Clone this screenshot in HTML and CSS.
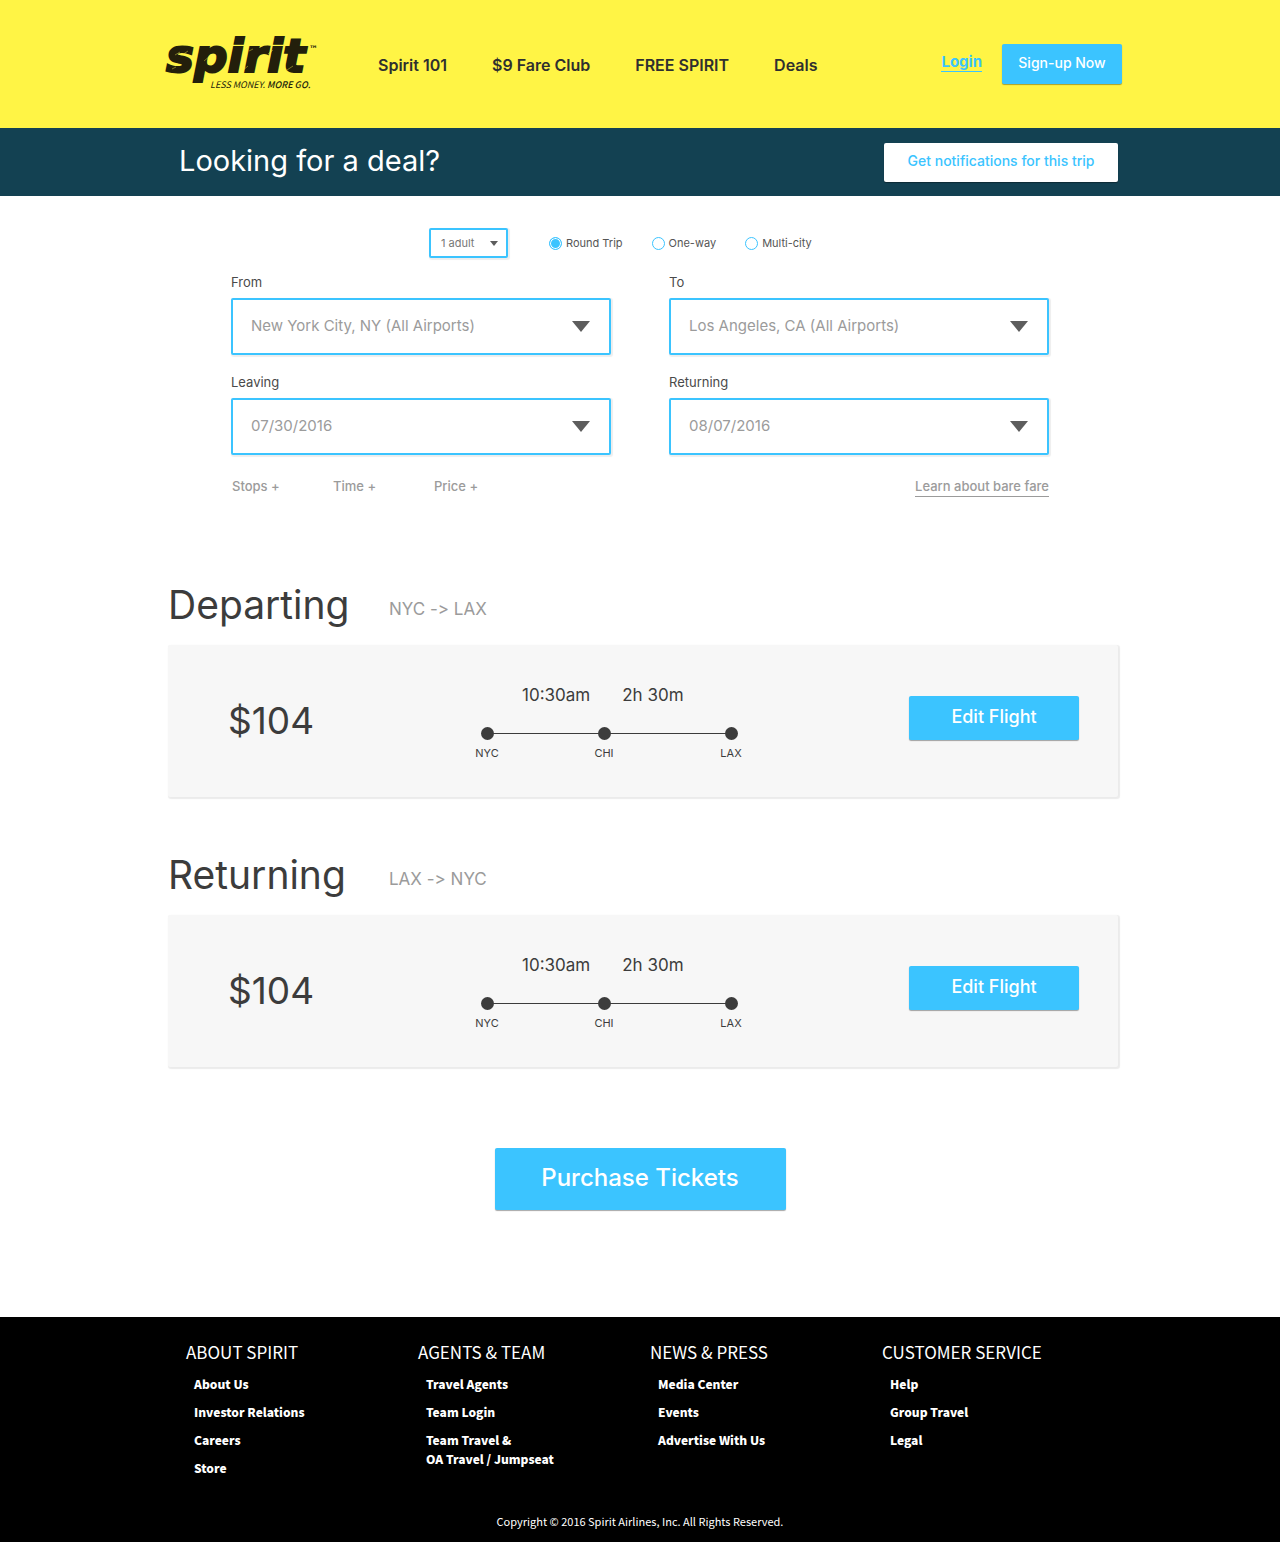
FILE: index.html
```html
<!DOCTYPE html>
<html lang="en">
<head>
<meta charset="utf-8">
<meta name="viewport" content="width=device-width, initial-scale=1">
<title>Spirit Airlines</title>
<link rel="stylesheet" href="styles.css">
</head>
<body>
<header class="site-header">
  <div class="container header-row">
    <a class="logo" href="#" aria-label="Spirit home">
      <svg width="154" height="54" viewBox="0 0 154 54">
        <text class="logo-name" x="1" y="35">spirit</text>
        <text class="logo-tm" x="144" y="15">™</text>
        <text class="logo-tag" x="45" y="51">LESS MONEY. <tspan class="logo-tag-strong">MORE GO.</tspan></text>
        <g class="logo-scratch">
          <path d="M10 18l5-3M17 18l6-4M39 24l6-5M56 34l7-5M77 34l6-5M103 17l5-4M122 33l6-4M7 32l4-2M84 14l4-2"/>
        </g>
      </svg>
    </a>
    <nav class="main-nav" aria-label="Main">
      <a href="#">Spirit 101</a>
      <a href="#">$9 Fare Club</a>
      <a href="#">FREE SPIRIT</a>
      <a href="#">Deals</a>
    </nav>
    <div class="account">
      <a class="login" href="#">Login</a>
      <button class="btn btn-signup" type="button">Sign-up Now</button>
    </div>
  </div>
</header>

<section class="deal-bar">
  <div class="container deal-row">
    <h2 class="deal-title">Looking for a deal?</h2>
    <button class="btn btn-notify" type="button">Get notifications for this trip</button>
  </div>
</section>

<main>
  <form class="search">
    <div class="options">
      <div class="select select-small">
        <select aria-label="Passengers"><option>1 adult</option></select>
      </div>
      <div class="trip-types">
        <label class="radio"><input type="radio" name="trip" checked>Round Trip</label>
        <label class="radio"><input type="radio" name="trip">One-way</label>
        <label class="radio"><input type="radio" name="trip">Multi-city</label>
      </div>
    </div>
    <div class="fields">
      <div class="field">
        <label for="from">From</label>
        <div class="select"><select id="from"><option>New York City, NY (All Airports)</option></select></div>
      </div>
      <div class="field">
        <label for="to">To</label>
        <div class="select"><select id="to"><option>Los Angeles, CA (All Airports)</option></select></div>
      </div>
      <div class="field">
        <label for="leaving">Leaving</label>
        <div class="select"><select id="leaving"><option>07/30/2016</option></select></div>
      </div>
      <div class="field">
        <label for="returning">Returning</label>
        <div class="select"><select id="returning"><option>08/07/2016</option></select></div>
      </div>
    </div>
    <div class="filters">
      <button class="filter" type="button">Stops +</button>
      <button class="filter" type="button">Time +</button>
      <button class="filter" type="button">Price +</button>
      <a class="learn" href="#">Learn about bare fare</a>
    </div>
  </form>

  <div class="container flights">
    <section class="flight">
      <div class="flight-head">
        <h2>Departing</h2>
        <p>NYC -&gt; LAX</p>
      </div>
      <div class="card">
        <p class="price">$104</p>
        <div class="route">
          <p class="times"><span>10:30am</span><span>2h 30m</span></p>
          <ol class="stops"><li>NYC</li><li>CHI</li><li>LAX</li></ol>
        </div>
        <button class="btn btn-edit" type="button">Edit Flight</button>
      </div>
    </section>
    <section class="flight">
      <div class="flight-head">
        <h2>Returning</h2>
        <p>LAX -&gt; NYC</p>
      </div>
      <div class="card">
        <p class="price">$104</p>
        <div class="route">
          <p class="times"><span>10:30am</span><span>2h 30m</span></p>
          <ol class="stops"><li>NYC</li><li>CHI</li><li>LAX</li></ol>
        </div>
        <button class="btn btn-edit" type="button">Edit Flight</button>
      </div>
    </section>
  </div>

  <div class="purchase">
    <button class="btn btn-purchase" type="button">Purchase Tickets</button>
  </div>
</main>

<footer class="site-footer">
  <div class="footer-columns">
    <section>
      <h3>ABOUT SPIRIT</h3>
      <ul>
        <li><a href="#">About Us</a></li>
        <li><a href="#">Investor Relations</a></li>
        <li><a href="#">Careers</a></li>
        <li><a href="#">Store</a></li>
      </ul>
    </section>
    <section>
      <h3>AGENTS &amp; TEAM</h3>
      <ul>
        <li><a href="#">Travel Agents</a></li>
        <li><a href="#">Team Login</a></li>
        <li><a href="#">Team Travel &amp;<br>OA Travel / Jumpseat</a></li>
      </ul>
    </section>
    <section>
      <h3>NEWS &amp; PRESS</h3>
      <ul>
        <li><a href="#">Media Center</a></li>
        <li><a href="#">Events</a></li>
        <li><a href="#">Advertise With Us</a></li>
      </ul>
    </section>
    <section>
      <h3>CUSTOMER SERVICE</h3>
      <ul>
        <li><a href="#">Help</a></li>
        <li><a href="#">Group Travel</a></li>
        <li><a href="#">Legal</a></li>
      </ul>
    </section>
  </div>
  <p class="copyright">Copyright © 2016 Spirit Airlines, Inc. All Rights Reserved.</p>
</footer>
</body>
</html>
```
FILE: styles.css
```css
:root {
  --yellow: #fff445;
  --blue: #3bc4ff;
  --navy: #134152;
  --ink: #3c3c3c;
  --muted: #9b9b9b;
}

* {
  box-sizing: border-box;
}

body {
  margin: 0;
  background: #fff;
  color: var(--ink);
  font-family: Inter, "Liberation Sans", sans-serif;
  font-size: 14px;
  line-height: 20px;
}

h2, h3, p, ol, ul {
  margin: 0;
  padding: 0;
  font-weight: 400;
}

ol, ul {
  list-style: none;
}

button, select {
  font: inherit;
  color: inherit;
}

.container {
  max-width: 964px;
  margin: 0 auto;
}

/* Buttons */
.btn {
  display: block;
  padding: 0 0 2px;
  border: 0;
  border-radius: 2px;
  background: var(--blue);
  box-shadow: 0 1px 1px rgba(0, 0, 0, 0.35);
  color: #fff;
  font-weight: 500;
  white-space: nowrap;
  cursor: pointer;
}

.btn-signup {
  width: 120px;
  height: 40px;
  font-size: 14px;
}

.btn-notify {
  width: 234px;
  height: 39px;
  background: #fff;
  color: var(--blue);
  font-size: 14px;
}

.btn-edit {
  width: 170px;
  height: 44px;
  font-size: 18px;
}

.btn-purchase {
  width: 291px;
  height: 62px;
  font-size: 24px;
}

/* Header */
.site-header {
  background: var(--yellow);
}

.header-row {
  display: flex;
  align-items: center;
  min-height: 128px;
  padding-left: 7px;
}

.logo {
  flex: none;
  width: 154px;
  height: 54px;
}

.logo svg {
  display: block;
  overflow: visible;
}

.logo text {
  fill: #231f0b;
}

.logo .logo-name {
  font: italic 700 47px "DejaVu Sans", sans-serif;
  stroke: #231f0b;
  stroke-width: 2;
}

.logo .logo-tm {
  font: 900 9px "DejaVu Sans", sans-serif;
}

.logo .logo-tag {
  font: italic 400 9px "Noto Sans CJK SC", sans-serif;
}

.logo .logo-tag-strong {
  font-weight: 500;
}

.logo-scratch {
  fill: none;
  stroke: var(--yellow);
  stroke-width: 0.6;
  opacity: 0.7;
}

.main-nav {
  display: flex;
  gap: 45px;
  padding: 2px 0 0 59px;
}

.main-nav a {
  color: #2f2f2f;
  font-size: 16px;
  font-weight: 600;
  text-decoration: none;
  white-space: nowrap;
}

.account {
  display: flex;
  align-items: center;
  gap: 20px;
  margin-left: auto;
}

.login {
  margin-bottom: 4px;
  border-bottom: 1px solid var(--blue);
  color: var(--blue);
  font-size: 15px;
  font-weight: 700;
  line-height: 19px;
  text-decoration: none;
}

/* Deal bar */
.deal-bar {
  background: var(--navy);
}

.deal-row {
  display: flex;
  align-items: center;
  justify-content: space-between;
  min-height: 68px;
  padding: 0 4px 0 21px;
}

.deal-title {
  padding-bottom: 3px;
  color: #fff;
  font-size: 29px;
  line-height: 32px;
}

/* Search */
.search {
  max-width: 818px;
  margin: 0 auto;
  padding-top: 32px;
}

.options {
  display: flex;
  align-items: center;
  gap: 41px;
  margin-bottom: 15px;
  padding-left: 198px;
}

.trip-types {
  display: flex;
  gap: 29px;
}

.radio {
  display: flex;
  align-items: center;
  gap: 4px;
  color: #555;
  font-size: 11px;
}

.radio input {
  appearance: none;
  width: 13px;
  height: 13px;
  margin: 0;
  border: 1px solid var(--blue);
  border-radius: 50%;
}

.radio input:checked {
  background: var(--blue);
  box-shadow: inset 0 0 0 1px #fff;
}

.select {
  position: relative;
}

.select select {
  appearance: none;
  display: block;
  width: 100%;
  height: 57px;
  padding: 0 48px 2px 18px;
  border: 2px solid var(--blue);
  border-radius: 2px;
  background: #fff;
  box-shadow: 1px 1px 1px 1px rgba(0, 0, 0, 0.07);
  color: var(--muted);
  font-size: 15px;
}

.select::after {
  content: "";
  position: absolute;
  top: 23px;
  right: 21px;
  border: solid transparent;
  border-width: 11px 9px 0;
  border-top-color: #5d5d5d;
  pointer-events: none;
}

.select-small {
  width: 79px;
}

.select-small select {
  height: 30px;
  padding: 0 20px 0 10px;
  color: #777;
  font-size: 11px;
}

.select-small::after {
  top: 13px;
  right: 10px;
  border-width: 5px 4px 0;
}

.fields {
  display: grid;
  grid-template-columns: 1fr 1fr;
  gap: 18px 58px;
}

.field label {
  display: block;
  margin-bottom: 7px;
  color: #4a4a4a;
  font-size: 13px;
  line-height: 18px;
}

.filters {
  display: flex;
  align-items: flex-start;
  margin-top: 21px;
  color: var(--muted);
  font-size: 13px;
  font-weight: 500;
}

.filter {
  width: 101px;
  padding: 0 1px;
  border: 0;
  background: none;
  text-align: left;
  cursor: pointer;
}

.learn {
  margin-left: auto;
  border-bottom: 1px solid var(--muted);
  color: inherit;
  text-decoration: none;
}

/* Flights */
.flights {
  display: grid;
  gap: 54px;
  margin-top: 84px;
  padding: 0 4px 0 10px;
}

.flight-head {
  display: grid;
  grid-template-columns: 221px 1fr;
  align-items: center;
  margin-bottom: 16px;
}

.flight-head h2 {
  font-size: 39px;
  line-height: 48px;
}

.flight-head p {
  padding-top: 8px;
  color: var(--muted);
  font-size: 17px;
  /* keeps the typed "->" from turning into an arrow glyph */
  font-variant-ligatures: none;
}

.card {
  display: grid;
  grid-template-columns: 246px 1fr auto;
  align-items: center;
  min-height: 152px;
  padding: 0 39px 6px 60px;
  border-radius: 2px;
  background: #f7f7f7;
  box-shadow: 1px 1px 1px 1px rgba(0, 0, 0, 0.08);
}

.price {
  padding-top: 5px;
  font-size: 37px;
  line-height: 48px;
}

.route {
  padding-top: 10px;
}

.times {
  display: flex;
  gap: 32px;
  margin-bottom: 22px;
  padding-left: 48px;
  font-size: 17px;
}

.stops {
  position: relative;
  display: grid;
  grid-template-columns: 117px 127px 26px;
  width: 270px;
  font-size: 11px;
  line-height: 16px;
}

.stops::before {
  content: "";
  position: absolute;
  top: 6px;
  right: 13px;
  left: 13px;
  height: 1px;
  background: var(--ink);
}

.stops li {
  width: 26px;
  text-align: center;
}

.stops li::before {
  content: "";
  display: block;
  width: 13px;
  height: 13px;
  margin: 0 auto 5px;
  border-radius: 50%;
  background: var(--ink);
}

.purchase {
  display: flex;
  justify-content: center;
  padding: 81px 0 107px;
}

/* Footer */
.site-footer {
  padding: 23px 0 11px;
  background: #000;
  color: #fff;
  font-family: "Noto Sans CJK SC", "Open Sans", sans-serif;
}

.footer-columns {
  display: grid;
  grid-template-columns: repeat(4, 1fr);
  max-width: 948px;
  min-height: 171px;
  margin: 0 auto;
  padding-left: 20px;
}

.site-footer h3 {
  margin-bottom: 10px;
  font-size: 17px;
  line-height: 24px;
  white-space: nowrap;
}

.site-footer li {
  margin-bottom: 9px;
  padding-left: 8px;
  font-size: 12px;
  line-height: 19px;
}

.site-footer a {
  color: inherit;
  font-weight: 900;
  text-decoration: none;
}

.copyright {
  font-size: 11px;
  text-align: center;
}
```
